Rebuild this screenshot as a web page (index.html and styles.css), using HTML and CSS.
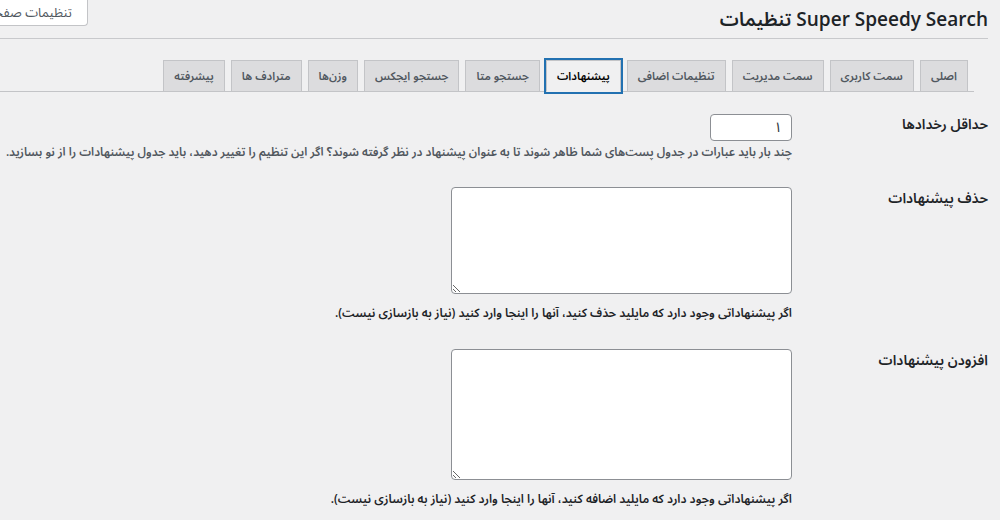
FILE: index.html
```html
<!DOCTYPE html>
<html lang="fa" dir="rtl">
<head>
<meta charset="utf-8">
<title>Super Speedy Search تنظیمات</title>
<link rel="stylesheet" href="styles.css">
</head>
<body>
<div class="wrap">
  <div class="header">
    <h1 class="title">Super Speedy Search تنظیمات</h1>
    <button class="screen-options" type="button">تنظیمات صفحه<span class="arrow"></span></button>
  </div>

  <nav class="tabs">
    <a class="tab">اصلی</a>
    <a class="tab">سمت کاربری</a>
    <a class="tab">سمت مدیریت</a>
    <a class="tab">تنظیمات اضافی</a>
    <a class="tab tab-active">پیشنهادات</a>
    <a class="tab">جستجو متا</a>
    <a class="tab">جستجو ایجکس</a>
    <a class="tab">وزن‌ها</a>
    <a class="tab">مترادف ها</a>
    <a class="tab">پیشرفته</a>
  </nav>

  <div class="form">
    <div class="row">
      <div class="label label-first">حداقل رخدادها</div>
      <div class="field">
        <input class="num" type="text" value="۱">
        <p class="desc desc-muted">چند بار باید عبارات در جدول پست‌های شما ظاهر شوند تا به عنوان پیشنهاد در نظر گرفته شوند؟ اگر این تنظیم را تغییر دهید، باید جدول پیشنهادات را از نو بسازید.</p>
      </div>
    </div>

    <div class="row">
      <div class="label">حذف پیشنهادات</div>
      <div class="field">
        <textarea class="area area-small"></textarea>
        <p class="desc desc-strong">اگر پیشنهاداتی وجود دارد که مایلید حذف کنید، آنها را اینجا وارد کنید (نیاز به بازسازی نیست).</p>
      </div>
    </div>

    <div class="row">
      <div class="label">افزودن پیشنهادات</div>
      <div class="field">
        <textarea class="area area-large"></textarea>
        <p class="desc desc-strong">اگر پیشنهاداتی وجود دارد که مایلید اضافه کنید، آنها را اینجا وارد کنید (نیاز به بازسازی نیست).</p>
      </div>
    </div>
  </div>
</div>
</body>
</html>
```

FILE: styles.css
```css
html, body {
  margin: 0;
  padding: 0;
  background: #f0f0f1;
  overflow: hidden;
}

body {
  font-family: "Open Sans", "Noto Sans Arabic", "Noto Naskh Arabic", "DejaVu Sans", sans-serif;
  color: #1d2327;
  font-size: 14px;
  direction: rtl;
}

.wrap {
  padding-right: 12px;
}

.header {
  display: flex;
  align-items: flex-start;
  height: 38px;
  border-bottom: 1px solid #c8c9cc;
}

.title {
  margin: 0;
  padding-top: 4px;
  font-size: 19px;
  line-height: 30px;
  font-weight: 600;
  color: #1d2327;
  white-space: nowrap;
}

.screen-options {
  margin-right: auto;
  margin-left: -32px;
  height: 26px;
  padding: 0 15px 0 8px;
  background: #fff;
  border: 1px solid #c3c4c7;
  border-top: none;
  border-radius: 0 0 4px 4px;
  font-family: inherit;
  font-size: 13px;
  color: #50575e;
  display: flex;
  align-items: center;
  gap: 4px;
  white-space: nowrap;
}

.arrow {
  display: inline-block;
  width: 0;
  height: 0;
  border-left: 4px solid transparent;
  border-right: 4px solid transparent;
  border-top: 5px solid #787c82;
}

.tabs {
  display: flex;
  margin-top: 21px;
  margin-right: 14px;
  padding-right: 6px;
  border-bottom: 1px solid #c3c4c7;
  gap: 6px;
}

.tab {
  display: block;
  padding: 5px 10px;
  line-height: 20px;
  font-size: 11.3px;
  font-weight: 600;
  color: #50575e;
  background: #dcdcde;
  border: 1px solid #c3c4c7;
  margin-bottom: -1px;
  white-space: nowrap;
}

.tab-active {
  background: #f0f0f1;
  color: #000;
  border-bottom-color: #f0f0f1;
  box-shadow: 0 0 0 2px #2271b1;
  position: relative;
}

.form {
  padding-top: 22px;
  display: flex;
  flex-direction: column;
  gap: 26px;
}

.row {
  display: grid;
  grid-template-columns: 196px 1fr;
}

.label {
  font-size: 14px;
  font-weight: 600;
  line-height: 20px;
  padding-top: 1px;
  color: #1d2327;
  white-space: nowrap;
}

.label-first {
  padding-top: 0;
}

.field {
  display: flex;
  flex-direction: column;
  align-items: flex-start;
}

.num {
  box-sizing: border-box;
  width: 82px;
  height: 27px;
  margin: 0;
  padding: 0 9px;
  border: 1px solid #8c8f94;
  border-radius: 4px;
  background: #fff;
  font-family: inherit;
  font-size: 14px;
  color: #2c3338;
  text-align: right;
}

.desc {
  margin: 0;
  line-height: 20px;
  white-space: nowrap;
}

.desc-muted {
  font-size: 11.8px;
  color: #50575e;
  font-weight: 600;
}

.desc-strong {
  margin-top: 9px;
  font-size: 12px;
  font-weight: 600;
  color: #1d2327;
}

.area {
  box-sizing: border-box;
  display: block;
  width: 341px;
  margin: 0;
  border: 1px solid #8c8f94;
  border-radius: 4px;
  background: #fff;
  font-family: inherit;
}

.area-small {
  height: 107px;
}

.area-large {
  height: 131px;
}
```
